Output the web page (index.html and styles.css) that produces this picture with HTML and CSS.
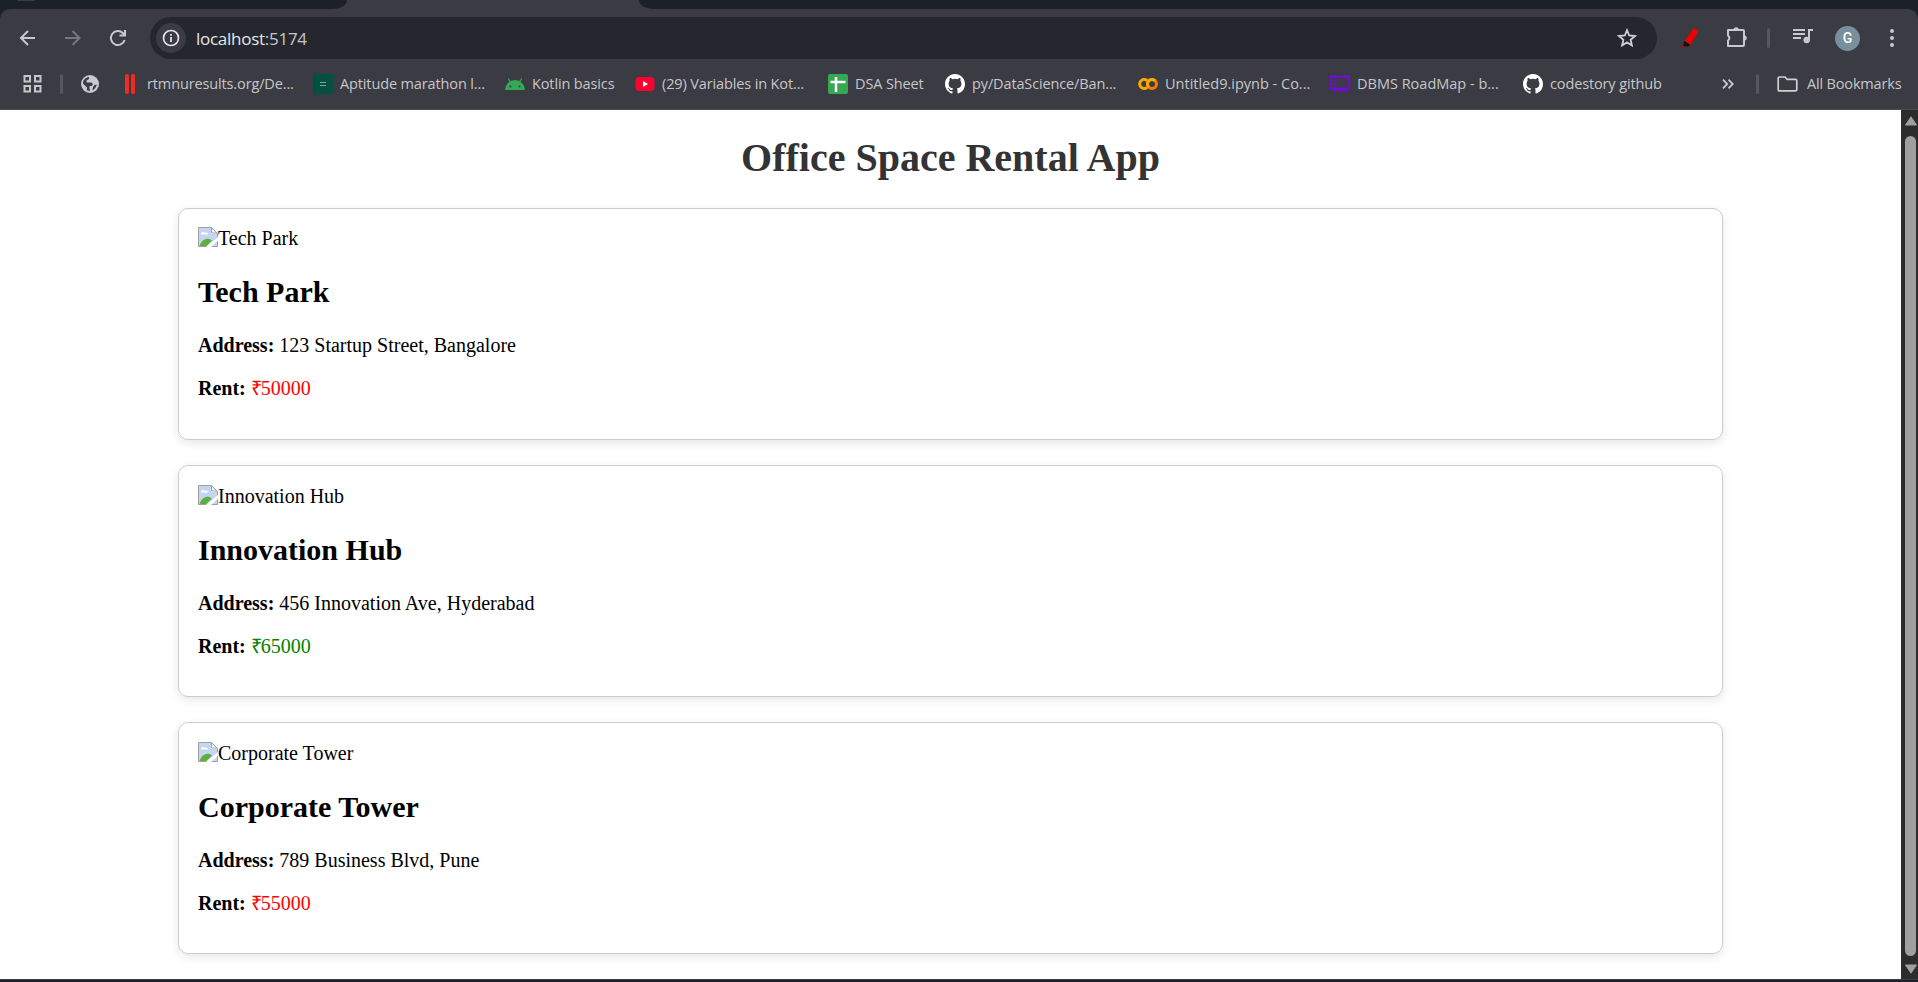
FILE: index.html
```html
<!DOCTYPE html>
<html lang="en">
<head>
<meta charset="utf-8">
<title>Office Space Rental App</title>
<link rel="stylesheet" href="styles.css">
</head>
<body>
<svg class="defs" width="0" height="0">
  <symbol id="github" viewBox="0 0 16 16"><path fill="#fff" d="M8 0C3.58 0 0 3.58 0 8c0 3.54 2.29 6.53 5.47 7.59.4.07.55-.17.55-.38 0-.19-.01-.82-.01-1.49-2.01.37-2.53-.49-2.69-.94-.09-.23-.48-.94-.82-1.13-.28-.15-.68-.52-.01-.53.63-.01 1.08.58 1.23.82.72 1.21 1.87.87 2.33.66.07-.52.28-.87.51-1.07-1.78-.2-3.64-.89-3.64-3.95 0-.87.31-1.59.82-2.15-.08-.2-.36-1.02.08-2.12 0 0 .67-.21 2.2.82a7.6 7.6 0 0 1 4 0c1.53-1.04 2.2-.82 2.2-.82.44 1.1.16 1.92.08 2.12.51.56.82 1.27.82 2.15 0 3.07-1.87 3.75-3.65 3.95.29.25.54.73.54 1.48 0 1.07-.01 1.93-.01 2.2 0 .21.15.46.55.38A8.01 8.01 0 0 0 16 8c0-4.42-3.58-8-8-8z"/></symbol>
  <symbol id="broken" viewBox="0 0 20 20">
    <path fill="#c5d6f4" stroke="#a0a0a0" d="M.5.5h13l6 6v13H.5z"/>
    <path fill="#fff" d="M3 7c0-2 3-3 4-1 2-1 3 0 3 1.500H3zM13 1v6h6z"/>
    <path fill="none" stroke="#a0a0a0" d="M13.500.5v5.500h6"/>
    <path fill="#5bb13c" d="M1.500 19C4 12 10 10 14 13.500L8.500 19z"/>
    <path fill="#fff" d="M8 20 20 10v3.500L13 20z"/>
  </symbol>
</svg>
<div class="frame">
<div class="tabs"><div class="tab-left"><i></i></div><div class="tab-active"></div><div class="tab-right"></div></div>
<header class="chrome">
  <div class="toolbar">
    <svg class="nav back" viewBox="0 0 20 20"><path d="M17 10H3M10 3 3 10l7 7"/></svg>
    <svg class="nav forward" viewBox="0 0 20 20"><path d="M2 10h14M9.500 3l7 7-7 7"/></svg>
    <svg class="nav reload" viewBox="0 0 20 20"><path d="M16.600 12A7 7 0 1 1 14.800 5L17 7.200M17 2v5.500h-5.500"/></svg>
    <div class="omnibox">
      <span class="info"><svg width="18" height="18" viewBox="0 0 18 18"><circle cx="9" cy="9" r="7.500" fill="none" stroke="#e3e3e8" stroke-width="1.700"/><path stroke="#e3e3e8" stroke-width="1.800" d="M9 8v5M9 5v1.800"/></svg></span>
      <span class="url">localhost<span class="port">:5174</span></span>
      <svg class="star" viewBox="0 0 20 20"><path fill="none" stroke="#d0d0d3" stroke-width="1.800" d="m10 2.200 2.200 5.300 5.800.5-4.400 3.800 1.300 5.600-4.900-3-4.900 3 1.300-5.600L2 8l5.800-.5z"/></svg>
    </div>
    <div class="actions">
      <svg class="marker" width="20" height="22" viewBox="0 0 20 22"><path fill="#ee0000" d="M13 1 17.500 4 9.500 18 3.500 14z"/><path fill="#111" d="m3.500 14 6 4-3 1.500L2 19z"/><path fill="#c00000" d="m2 18.500 2 1-1.500 1.500H.5z"/></svg>
      <svg class="puzzle" width="22" height="22" viewBox="0 0 22 22"><path fill="none" stroke="#c7c8d0" stroke-width="2" stroke-linejoin="round" d="M2 4h15q1 0 1 1v14q0 1-1 1H2v-5.500a3 3 0 0 0 0-5z"/><path fill="#c7c8d0" d="M7.500 4a2.700 2.700 0 0 1 5.400 0zM18 9.200a2.700 2.700 0 0 1 0 5.400z"/></svg>
      <i class="sep"></i>
      <svg class="media" width="20" height="17" viewBox="0 0 20 17"><path fill="none" stroke="#c7c8d0" stroke-width="2" d="M0 2h12M0 6h12M0 10h8M16 12V2h4"/><circle cx="13.700" cy="12" r="3.200" fill="#c7c8d0"/></svg>
      <span class="avatar">G</span>
      <svg class="dots" width="6" height="20" viewBox="0 0 6 20"><g fill="#c7c8d0"><circle cx="3" cy="3" r="2"/><circle cx="3" cy="10" r="2"/><circle cx="3" cy="17" r="2"/></g></svg>
    </div>
  </div>
  <nav class="bookmarks">
    <svg class="apps" width="20" height="20" viewBox="0 0 20 20"><path fill="none" stroke="#c7c7ca" stroke-width="2" d="M1.500 2H7v5.500H1.500zM12 2h5.500v5.500H12zM1.500 12H7v5.500H1.500zM12 12h5.500v5.500H12z"/></svg>
    <i class="sep"></i>
    <svg class="globe" width="18" height="18" viewBox="0 0 18 18"><circle cx="9" cy="9" r="9" fill="#c7c8d0"/><path fill="#3a3b43" d="M2 8.500C2 5 4.500 2.500 8 2L8 4 5.500 5.500V7.500h5L12 9.500 10.500 11H8.500v2.500L9 16A7 7 0 0 1 6 15.300V12.500L2.500 9zM13.500 10l2.300-.5q-.5 3-2.800 5L11.500 15l.5-3z"/></svg>
    <div class="list">
      <a><svg viewBox="0 0 20 20"><rect x="5" width="4" height="20" rx="2" fill="#f02b22"/><rect x="11" width="4" height="20" rx="2" fill="#f02b22"/></svg><span>rtmnuresults.org/De...</span></a>
      <a><svg viewBox="0 0 20 20"><path fill="#02513f" d="M0 0h20v20H0z"/><path stroke="#7fa79d" d="M7 8.500h6M7 11.500h6"/></svg><span>Aptitude marathon l...</span></a>
      <a><svg viewBox="0 0 20 20"><path fill="#34a853" d="M0 16a10 10 0 0 1 20 0z"/><path stroke="#34a853" stroke-width="1.300" d="m3.300 4.500 2.500 4M16.700 4.500l-2.500 4"/><circle cx="5.500" cy="12.500" r="1" fill="#3a3b43"/><circle cx="14.500" cy="12.500" r="1" fill="#3a3b43"/></svg><span>Kotlin basics</span></a>
      <a><svg viewBox="0 0 20 20"><rect x=".5" y="3" width="19" height="14" rx="4" fill="#ff0033"/><path fill="#fff" d="m8 7 5 3-5 3z"/></svg><span>(29) Variables in Kot...</span></a>
      <a><svg viewBox="0 0 20 20"><rect width="20" height="20" rx="2" fill="#34a853"/><path stroke="#fff" stroke-width="2.500" d="M8 3v15M2.500 8h15"/></svg><span>DSA Sheet</span></a>
      <a><svg><use href="#github"/></svg><span>py/DataScience/Ban...</span></a>
      <a><svg viewBox="0 0 20 20"><circle cx="14" cy="10" r="4.500" fill="none" stroke="#f57c00" stroke-width="3"/><path fill="none" stroke="#fbab00" stroke-width="3" d="M9 6.500A4.500 4.500 0 1 0 9 13.500M10.800 13.200A4.500 4.500 0 0 1 17.200 6.800"/></svg><span class="loose">Untitled9.ipynb - Co...</span></a>
      <a><svg viewBox="0 0 20 20"><path fill="none" stroke="#7a05e5" stroke-width="1.800" d="M1 2.500h18v12H1zM6 14.500 4 18.500M14 14.500l2 4M10 14.500v3M7.500 15v2M12.500 15v2"/><path fill="#7a05e5" d="M4 5.500h2v2H4zM7.500 5.500h2v2h-2zM4 9.500h2v2H4z"/></svg><span class="loose">DBMS RoadMap - b...</span></a>
      <a><svg><use href="#github"/></svg><span>codestory github</span></a>
    </div>
    <svg class="more" width="12" height="10" viewBox="0 0 12 10"><path fill="none" stroke="#c7c8d0" stroke-width="1.800" d="m1 .7 4.200 4.300L1 9.300M6.500.7l4.200 4.300-4.200 4.300"/></svg>
    <i class="sep"></i>
    <svg class="folder" width="21" height="16" viewBox="0 0 21 16"><path fill="none" stroke="#d0d0d3" stroke-width="1.700" stroke-linejoin="round" d="M2.500 1H8l2 2.300h8.500q1.300 0 1.300 1.300v9q0 1.300-1.300 1.300h-16q-1.300 0-1.300-1.300V2.300Q1.200 1 2.500 1z"/></svg>
    <span class="all">All Bookmarks</span>
  </nav>
</header>
</div>
<div class="viewport">
  <main>
    <h1>Office Space Rental App</h1>
    <section class="card">
      <div class="photo"><svg><use href="#broken"/></svg>Tech Park</div>
      <h2>Tech Park</h2>
      <p><b>Address:</b> 123 Startup Street, Bangalore</p>
      <p><b>Rent:</b> <span class="low"><span class="rupee">₹</span>50000</span></p>
    </section>
    <section class="card">
      <div class="photo"><svg><use href="#broken"/></svg>Innovation Hub</div>
      <h2>Innovation Hub</h2>
      <p><b>Address:</b> 456 Innovation Ave, Hyderabad</p>
      <p><b>Rent:</b> <span class="high"><span class="rupee">₹</span>65000</span></p>
    </section>
    <section class="card">
      <div class="photo"><svg><use href="#broken"/></svg>Corporate Tower</div>
      <h2>Corporate Tower</h2>
      <p><b>Address:</b> 789 Business Blvd, Pune</p>
      <p><b>Rent:</b> <span class="low"><span class="rupee">₹</span>55000</span></p>
    </section>
  </main>
  <aside class="scrollbar">
    <svg width="12" height="10" viewBox="0 0 12 10"><path fill="#9f9f9f" stroke="#9f9f9f" stroke-linejoin="round" d="M6 .8 11.500 9H.5z"/></svg>
    <i class="thumb"></i>
    <svg width="12" height="10" viewBox="0 0 12 10"><path fill="#9f9f9f" stroke="#9f9f9f" stroke-linejoin="round" d="M6 9.200.5 1h11z"/></svg>
  </aside>
</div>
<footer class="taskbar"></footer>
</body>
</html>
```
FILE: styles.css
```css
* { box-sizing: border-box; }
body { margin: 0; width: 1918px; height: 982px; overflow: hidden; display: flex; flex-direction: column; background: #fff; }
.defs { display: none; }
svg { flex: none; display: block; }
.frame { flex: none; background: #1c2028; }
.tabs { height: 9px; display: flex; background: #3a3b43; }
.tab-left { width: 347px; background: #1c2028; border-bottom-right-radius: 14px 9px; }
.tab-left i { display: block; width: 18px; height: 1px; margin-left: 17px; background: #3a3b43; }
.tab-active { width: 292px; }
.tab-right { flex: 1; background: #1c2028; border-bottom-left-radius: 14px 9px; }
.chrome { height: 101px; background: #3a3b43; border-bottom: 1px solid #4a4b50; border-radius: 10px 10px 0 0; font-family: "Open Sans", "Noto Sans", sans-serif; }
.toolbar { height: 57px; padding: 8px 0 0 18px; display: flex; align-items: flex-start; }
.nav { width: 20px; height: 20px; margin: 11px 25px 0 0; fill: none; stroke: #c7c8d0; stroke-width: 2; }
.forward { stroke: #76777e; }
.reload { margin-right: 22px; }
.omnibox { width: 1507px; height: 42px; border-radius: 21px; background: #25272f; display: flex; align-items: center; padding: 0 20px 0 6px; }
.info { width: 30px; height: 30px; border-radius: 50%; background: #3a3b43; display: flex; align-items: center; justify-content: center; }
.url { margin-left: 10px; font-size: 17px; letter-spacing: -.27px; color: #e6e6e8; flex: 1; }
.port { color: #c7c7c9; }
.star { width: 20px; height: 20px; }
.actions { display: flex; align-items: center; height: 42px; flex: 1; }
.marker { margin-left: 24px; }
.puzzle { margin-left: 25px; margin-top: -2px; }
.sep { width: 3px; height: 20px; border-radius: 2px; background: #55565e; flex: none; }
.actions .sep { margin-left: 19px; }
.media { margin-left: 23px; margin-top: -3px; }
.avatar { width: 25px; height: 25px; margin-left: 22px; border-radius: 50%; background: #78909c; color: #fff; font: 500 14px/25px Roboto, sans-serif; text-align: center; }
.dots { margin-left: 29px; }
.bookmarks { height: 36px; display: flex; align-items: center; padding-left: 23px; color: #c7c7c9; font-size: 14.5px; }
.bookmarks .sep { margin-left: 17px; }
.globe { margin-left: 18px; }
.list { margin-left: 21px; width: 1543px; display: grid; grid-template-columns: 193px 192px 130px 193px 117px 193px 192px 193px 140px; }
.list a { display: flex; align-items: center; gap: 7px; white-space: nowrap; letter-spacing: -.13px; }
.list svg { width: 20px; height: 20px; }
.list span, .all { position: relative; top: -1px; }
.list .loose { letter-spacing: 0; }
.more { margin-left: 59px; }
.bookmarks .more + .sep { margin-left: 22px; }
.folder { margin-left: 18px; }
.all { margin-left: 9px; letter-spacing: -.17px; white-space: nowrap; }
.viewport { height: 869px; flex: none; display: flex; overflow: hidden; }
main { width: 1901px; padding: 25px 178px 0; font-family: "Liberation Serif", serif; font-size: 20px; color: #000; }
h1 { margin: 0 0 27px; font-size: 40px; line-height: 46px; text-align: center; color: #333; }
.card { height: 232px; margin-bottom: 25px; padding: 18px 19px; border: 1px solid #ccc; border-radius: 10px; box-shadow: 0 3px 10px rgba(0,0,0,.1); }
.card + .card { padding-top: 19px; }
.photo { display: flex; height: 24px; line-height: 23px; }
.photo svg { width: 20px; height: 20px; }
h2 { margin: 24px 0 25px; font-size: 30px; line-height: 34px; }
p { margin: 0 0 20px; line-height: 23px; }
.low { color: #f00; }
.high { color: #008000; }
.rupee { letter-spacing: -1px; }
.scrollbar { width: 17px; background: #2c2c2c; display: flex; flex-direction: column; align-items: center; padding: 6px 0 5px 2px; }
.thumb { width: 11px; height: 820px; margin: 10px 0 8px; border-radius: 6px; background: #9f9f9f; }
.taskbar { height: 3px; background: #1d202b; border-top: 1px solid #3a3b43; }
```
